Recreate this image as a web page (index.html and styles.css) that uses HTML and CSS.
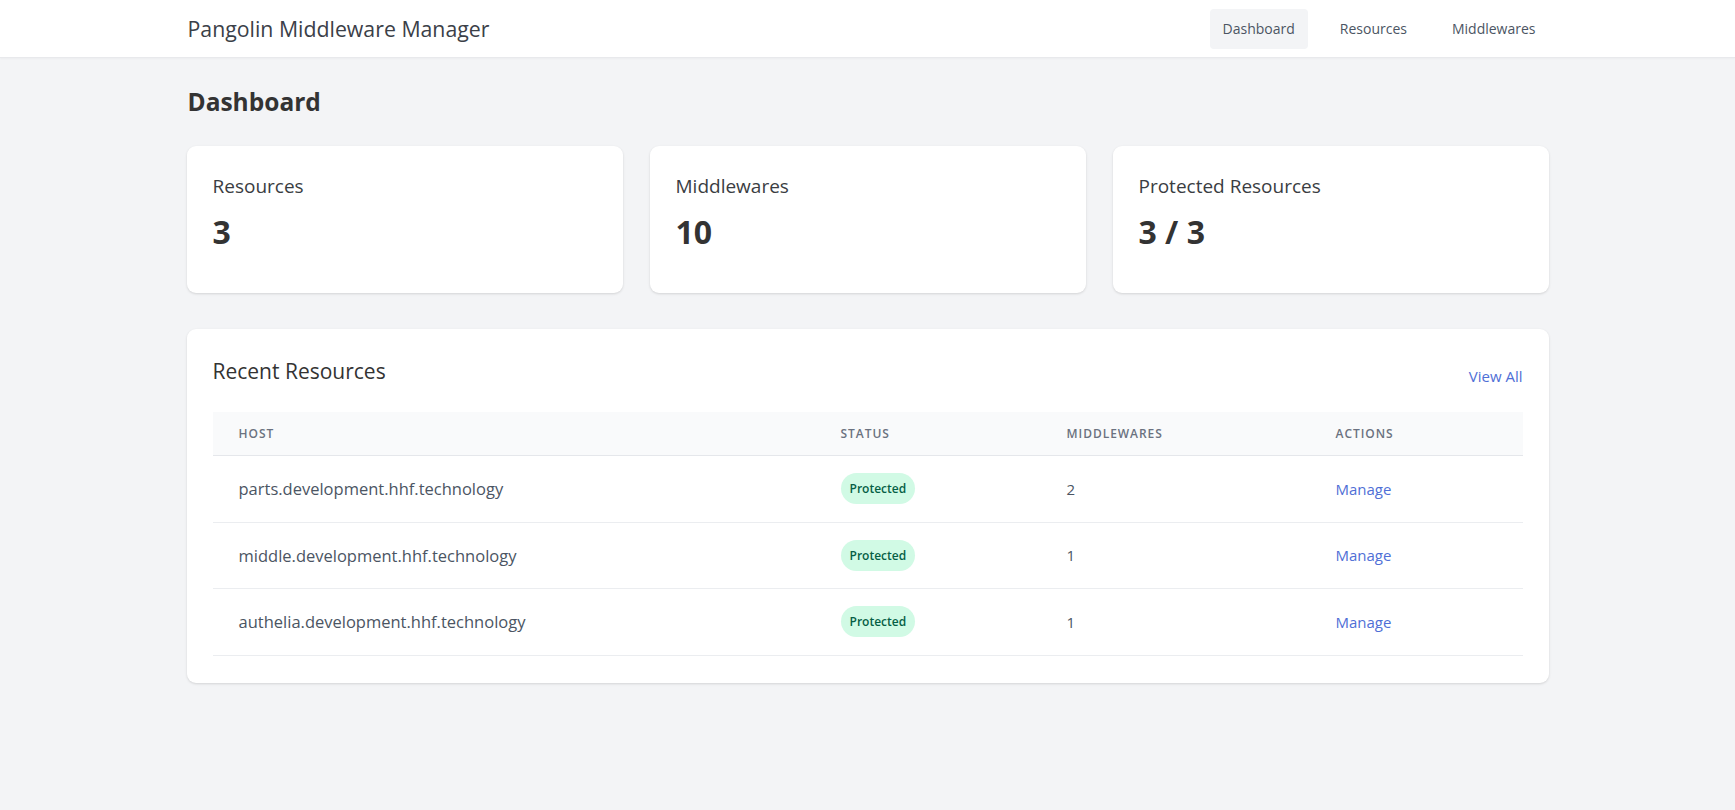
FILE: index.html
```html
<!DOCTYPE html>
<html lang="en">
<head>
<meta charset="utf-8">
<title>Pangolin Middleware Manager</title>
<link rel="stylesheet" href="styles.css">
</head>
<body>
<header class="topbar">
  <div class="container topbar-inner">
    <div class="brand">Pangolin Middleware Manager</div>
    <nav class="nav">
      <a class="nav-item active">Dashboard</a>
      <a class="nav-item">Resources</a>
      <a class="nav-item">Middlewares</a>
    </nav>
  </div>
</header>
<main class="container main">
  <h1 class="page-title">Dashboard</h1>
  <section class="stats">
    <div class="card stat">
      <div class="stat-label">Resources</div>
      <div class="stat-value">3</div>
    </div>
    <div class="card stat">
      <div class="stat-label">Middlewares</div>
      <div class="stat-value">10</div>
    </div>
    <div class="card stat">
      <div class="stat-label">Protected Resources</div>
      <div class="stat-value">3 / 3</div>
    </div>
  </section>
  <section class="card panel">
    <div class="panel-head">
      <h2 class="panel-title">Recent Resources</h2>
      <a class="link view-all">View All</a>
    </div>
    <div class="table">
      <div class="row head">
        <div class="cell">Host</div>
        <div class="cell">Status</div>
        <div class="cell">Middlewares</div>
        <div class="cell">Actions</div>
      </div>
      <div class="row">
        <div class="cell host">parts.development.hhf.technology</div>
        <div class="cell"><span class="badge">Protected</span></div>
        <div class="cell num">2</div>
        <div class="cell"><a class="link">Manage</a></div>
      </div>
      <div class="row">
        <div class="cell host">middle.development.hhf.technology</div>
        <div class="cell"><span class="badge">Protected</span></div>
        <div class="cell num">1</div>
        <div class="cell"><a class="link">Manage</a></div>
      </div>
      <div class="row">
        <div class="cell host">authelia.development.hhf.technology</div>
        <div class="cell"><span class="badge">Protected</span></div>
        <div class="cell num">1</div>
        <div class="cell"><a class="link">Manage</a></div>
      </div>
    </div>
  </section>
</main>
</body>
</html>
```
FILE: styles.css
```css
* { box-sizing: border-box; }
html, body { margin: 0; padding: 0; }
body {
  background: #f3f4f6;
  font-family: "Open Sans", "Noto Sans", "Liberation Sans", sans-serif;
  color: #333;
  height: 810px;
  overflow: hidden;
}
.container {
  width: 1362px;
  margin: 0 auto;
}
.topbar {
  background: #fff;
  height: 58px;
  border-bottom: 1px solid #e8e9ec;
  box-shadow: 0 1px 2px rgba(0,0,0,0.03);
}
.topbar-inner {
  height: 100%;
  display: flex;
  align-items: center;
  justify-content: space-between;
}
.brand {
  font-size: 21.3px;
  font-weight: 500;
  color: #3b4048;
  padding-left: 1px;
}
.nav {
  display: flex;
  gap: 19px;
}
.nav-item {
  display: block;
  padding: 0 13px;
  height: 40px;
  line-height: 40px;
  font-size: 14px;
  color: #4b5563;
  border-radius: 4px;
  cursor: pointer;
}
.nav-item.active {
  background: #f3f4f6;
}
.main {
  padding-top: 28px;
}
.page-title {
  margin: 0 0 28px 1px;
  font-size: 24.5px;
  line-height: 32px;
  font-weight: 700;
  color: #333;
}
.card {
  background: #fff;
  border-radius: 9px;
  box-shadow: 0 1px 3px rgba(0,0,0,0.10), 0 1px 2px rgba(0,0,0,0.04);
}
.stats {
  display: grid;
  grid-template-columns: repeat(3, 1fr);
  gap: 27px;
}
.stat {
  height: 147px;
  padding: 26px;
}
.stat-label {
  font-size: 19px;
  line-height: 28px;
  color: #3a3d42;
  font-weight: 500;
}
.stat-value {
  margin-top: 12px;
  font-size: 32px;
  line-height: 40px;
  font-weight: 700;
  color: #333;
}
.panel {
  margin-top: 36px;
  padding: 26px 26px 27px;
}
.panel-head {
  display: flex;
  justify-content: space-between;
  margin-bottom: 25px;
}
.panel-title {
  margin: 0;
  font-size: 21px;
  line-height: 32px;
  font-weight: 500;
  color: #333;
}
.view-all {
  align-self: flex-end;
  line-height: 22px;
}
.link {
  color: #4f6fd6;
  font-size: 15px;
  cursor: pointer;
}
.table {
  display: flex;
  flex-direction: column;
}
.row {
  display: grid;
  grid-template-columns: 602px 226px 269px 1fr;
  align-items: center;
  height: 66.5px;
  border-bottom: 1px solid #ebedf0;
}
.row.head {
  height: 44px;
  background: #f9fafb;
  border-bottom: 1px solid #e5e7eb;
}
.cell {
  padding: 0 26px;
}
.row.head .cell {
  font-size: 12px;
  font-weight: 600;
  letter-spacing: 0.08em;
  text-transform: uppercase;
  color: #6b7280;
}
.host {
  font-size: 16.5px;
  color: #4b5563;
}
.num {
  font-size: 15px;
  color: #4b5563;
}
.badge {
  display: inline-block;
  height: 31px;
  line-height: 31px;
  padding: 0 9px;
  border-radius: 16px;
  background: #d1fae5;
  color: #065f46;
  font-size: 12px;
  font-weight: 600;
}
```
